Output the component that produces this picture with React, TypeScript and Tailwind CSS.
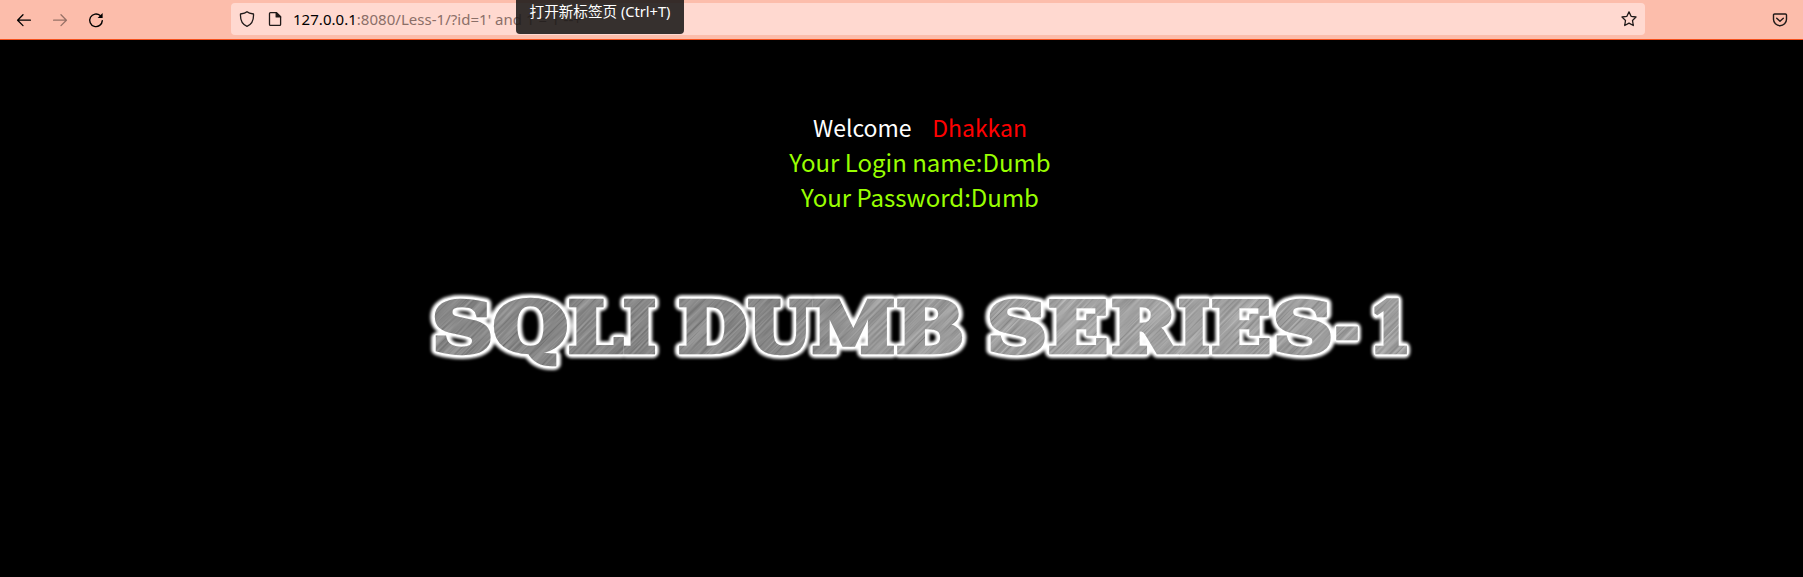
type Glyph = { c: string; x: number; w: number; y?: number };

const GLYPHS: Glyph[] = [
  { c: "S", x: 432, w: 61 },
  { c: "Q", x: 493, w: 75 },
  { c: "L", x: 568, w: 55 },
  { c: "I", x: 623, w: 33 },
  { c: "D", x: 678, w: 69 },
  { c: "U", x: 748, w: 64 },
  { c: "M", x: 812, w: 83 },
  { c: "B", x: 896, w: 68 },
  { c: "S", x: 987, w: 60 },
  { c: "E", x: 1048, w: 60 },
  { c: "R", x: 1111, w: 66 },
  { c: "I", x: 1178, w: 32 },
  { c: "E", x: 1211, w: 60 },
  { c: "S", x: 1273, w: 60 },
  { c: "-", x: 1335, w: 24, y: 352 },
  { c: "1", x: 1369, w: 42 },
];

function Letters() {
  return (
    <>
      {GLYPHS.map((g, i) => (
        <text key={i} x={g.x} y={g.y ?? 351.5} textLength={g.w} lengthAdjust="spacingAndGlyphs">
          {g.c}
        </text>
      ))}
    </>
  );
}

function Banner() {
  return (
    <svg
      viewBox="420 280 1000 100"
      className="h-[100px] w-[1000px] font-['DejaVu_Serif'] text-[70px] font-bold"
      strokeLinejoin="round"
    >
      <defs>
        <filter id="glow" x="-5%" y="-30%" width="110%" height="160%">
          <feGaussianBlur stdDeviation="1.6" />
        </filter>
        <filter id="brush" x="0" y="0" width="100%" height="100%" colorInterpolationFilters="sRGB">
          <feTurbulence type="fractalNoise" baseFrequency="0.015 0.5" numOctaves="3" seed="4" />
          <feColorMatrix values="1.1 0 0 0 -0.05  1.1 0 0 0 -0.05  1.1 0 0 0 -0.05  0 0 0 0 0.3" />
        </filter>
        <linearGradient id="metal" gradientUnits="userSpaceOnUse" x1="434" y1="0" x2="1410" y2="0">
          <stop offset="0" stopColor="#8a8a8a" />
          <stop offset=".35" stopColor="#8a8a8a" />
          <stop offset=".46" stopColor="#a2a2a2" />
          <stop offset=".65" stopColor="#b0b0b0" />
          <stop offset="1" stopColor="#a8a8a8" />
        </linearGradient>
        <mask id="letters" maskUnits="userSpaceOnUse" x="420" y="280" width="1000" height="100">
          <g fill="#fff" stroke="#fff" strokeWidth="4.5" strokeLinejoin="miter" strokeMiterlimit="2">
            <Letters />
          </g>
        </mask>
      </defs>
      <g fill="#fff" stroke="#fff" strokeWidth="12" filter="url(#glow)">
        <Letters />
      </g>
      <g fill="#fff" stroke="#fff" strokeWidth="8">
        <Letters />
      </g>
      <g mask="url(#letters)">
        <rect x="420" y="280" width="1000" height="100" fill="url(#metal)" />
        <g transform="rotate(-45 920 330)">
          <rect x="500" y="-90" width="840" height="840" filter="url(#brush)" />
        </g>
      </g>
    </svg>
  );
}

const icon = "h-4 w-4 shrink-0";

function Toolbar() {
  return (
    <header className="relative flex h-10 items-center border-b border-[#f4511e] bg-[#fcbdab] pl-4">
      <nav className="flex w-[215px] items-center gap-5 text-black">
        <svg className={icon} viewBox="0 0 16 16" fill="none" stroke="currentColor" strokeWidth="1.3" strokeLinecap="round" strokeLinejoin="round">
          <path d="M14.4 8.2H1.6M7 2.8L1.6 8.2L7 13.6" />
        </svg>
        <svg className="h-4 w-4 shrink-0 opacity-40" viewBox="0 0 16 16" fill="none" stroke="currentColor" strokeWidth="1.3" strokeLinecap="round" strokeLinejoin="round">
          <path d="M1.6 8.2H14.4M9 2.8L14.4 8.2L9 13.6" />
        </svg>
        <svg className={icon} viewBox="0 0 16 16" fill="none" stroke="currentColor" strokeWidth="1.4" strokeLinecap="round">
          <path d="M12.2 3.6A6.3 6.3 0 1 0 14.3 8.6" />
          <path d="M14.6 1V6H9.6Z" fill="currentColor" stroke="none" />
        </svg>
      </nav>
      <div className="mb-px flex h-8 w-[1414px] items-center rounded bg-[#ffd9d0] pr-2 pl-2 text-[#201a19]">
        <svg className={icon} viewBox="0 0 16 16" fill="none" stroke="currentColor" strokeWidth="1.3" strokeLinejoin="round">
          <path d="M8 .8C6.3 2.3 3.8 2.7 1.5 3C1.2 8.5 3 13.5 8 15.3C13 13.5 14.8 8.5 14.5 3C12.2 2.7 9.7 2.3 8 .8Z" />
        </svg>
        <svg className="ml-3 h-4 w-4 shrink-0" viewBox="0 0 16 16" fill="none" stroke="currentColor" strokeWidth="1.3" strokeLinejoin="round">
          <path d="M3.5 1.6H9.5L13.6 5.7V13.4Q13.6 14.4 12.6 14.4H3.5Q2.5 14.4 2.5 13.4V2.6Q2.5 1.6 3.5 1.6Z" />
          <path d="M9.2 1.6V5.9H13.6Z" fill="currentColor" />
        </svg>
        <p className="ml-[10px] flex-1 font-['Noto_Sans',sans-serif] text-[15px] tracking-[0.03px] whitespace-pre text-[#8b6f68]">
          <span className="text-black">127.0.0.1</span>:8080/Less-1/?id=1' and 1 = 1 --+
        </p>
        <svg className={icon} viewBox="0 0 16 16" fill="none" stroke="currentColor" strokeWidth="1.3" strokeLinejoin="round">
          <path d="M8 .9L10.1 5.3L15 6L11.5 9.5L12.3 14.5L8 12.1L3.7 14.5L4.5 9.5L1 6L5.9 5.3Z" />
        </svg>
      </div>
      <svg className="ml-[127px] h-4 w-4 text-[#201a19]" viewBox="0 0 16 16" fill="none" stroke="currentColor" strokeWidth="1.4" strokeLinecap="round" strokeLinejoin="round">
        <path d="M2.6 2H13.4Q14.5 2 14.5 3.1V7.2A6.5 6.5 0 0 1 1.5 7.2V3.1Q1.5 2 2.6 2Z" />
        <path d="M4.7 6.2L8 9.3L11.3 6.2" />
      </svg>
      <div className="absolute top-0 left-[516px] flex h-[34px] w-[168px] justify-center rounded-b bg-[#1a1817]/88 font-['Noto_Sans','Noto_Sans_CJK_SC',sans-serif] text-[14.6px] leading-[22px] whitespace-nowrap text-white">
        打开新标签页 (Ctrl+T)
      </div>
    </header>
  );
}

export default function App() {
  return (
    <div className="h-[577px] w-[1803px] overflow-hidden bg-black">
      <Toolbar />
      <main className="flex flex-col items-center pt-[70px] pl-[37px] font-['Noto_Sans_CJK_SC',sans-serif] text-[24px] leading-[35px] text-[#99ff00]">
        <p className="h-[34px] text-[23px] whitespace-pre text-white">
          Welcome{"    "}<span className="text-[#f00]">Dhakkan</span>
        </p>
        <p>Your Login name:Dumb</p>
        <p>Your Password:Dumb</p>
        <div className="mt-[66px]">
          <Banner />
        </div>
      </main>
    </div>
  );
}
